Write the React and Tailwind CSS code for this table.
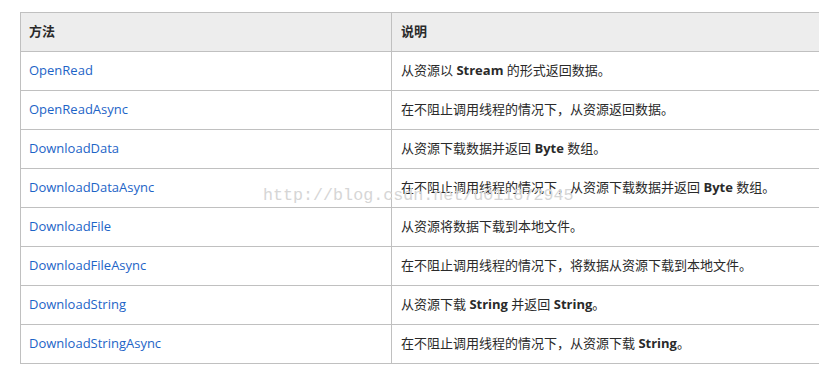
import React from "react";

const rows = [
  ["OpenRead", <>从资源以 <b>Stream</b> 的形式返回数据。</>],
  ["OpenReadAsync", <>在不阻止调用线程的情况下，从资源返回数据。</>],
  ["DownloadData", <>从资源下载数据并返回 <b>Byte</b> 数组。</>],
  ["DownloadDataAsync", <>在不阻止调用线程的情况下，从资源下载数据并返回 <b>Byte</b> 数组。</>],
  ["DownloadFile", <>从资源将数据下载到本地文件。</>],
  ["DownloadFileAsync", <>在不阻止调用线程的情况下，将数据从资源下载到本地文件。</>],
  ["DownloadString", <>从资源下载 <b>String</b> 并返回 <b>String</b>。</>],
  ["DownloadStringAsync", <>在不阻止调用线程的情况下，从资源下载 <b>String</b>。</>],
];

export default function App() {
  return (
    <div
      className="relative w-[819px] h-[377px] bg-white overflow-hidden pt-[12px] pl-[20px]"
      style={{ fontFamily: '"Open Sans", "Noto Sans CJK SC", sans-serif' }}
    >
      <div className="w-[820px] border-l border-t border-[#c0c0c0] text-[13px] text-[#2a2a2a]">
        <div className="flex h-[39px] bg-[#ededed] border-b border-[#c0c0c0]">
          <div className="w-[371px] shrink-0 border-r border-[#c0c0c0] flex items-center pl-[8px] font-bold">方法</div>
          <div className="flex-1 flex items-center pl-[9px] font-bold">说明</div>
        </div>
        {rows.map(([m, d], i) => (
          <div key={i} className="flex h-[39px] border-b border-[#c0c0c0]">
            <div className="w-[371px] shrink-0 border-r border-[#c0c0c0] flex items-center pl-[8px] text-[#1d64c7]">{m}</div>
            <div className="flex-1 flex items-center pl-[9px] whitespace-nowrap">
              <span>{d}</span>
            </div>
          </div>
        ))}
      </div>
      <div
        className="absolute left-[263px] top-[183px] text-[16.7px] text-[#d6d6d6] whitespace-nowrap pointer-events-none"
        style={{ fontFamily: '"Liberation Mono", monospace' }}
      >
        http://blog.csdn.net/u011872945
      </div>
    </div>
  );
}
